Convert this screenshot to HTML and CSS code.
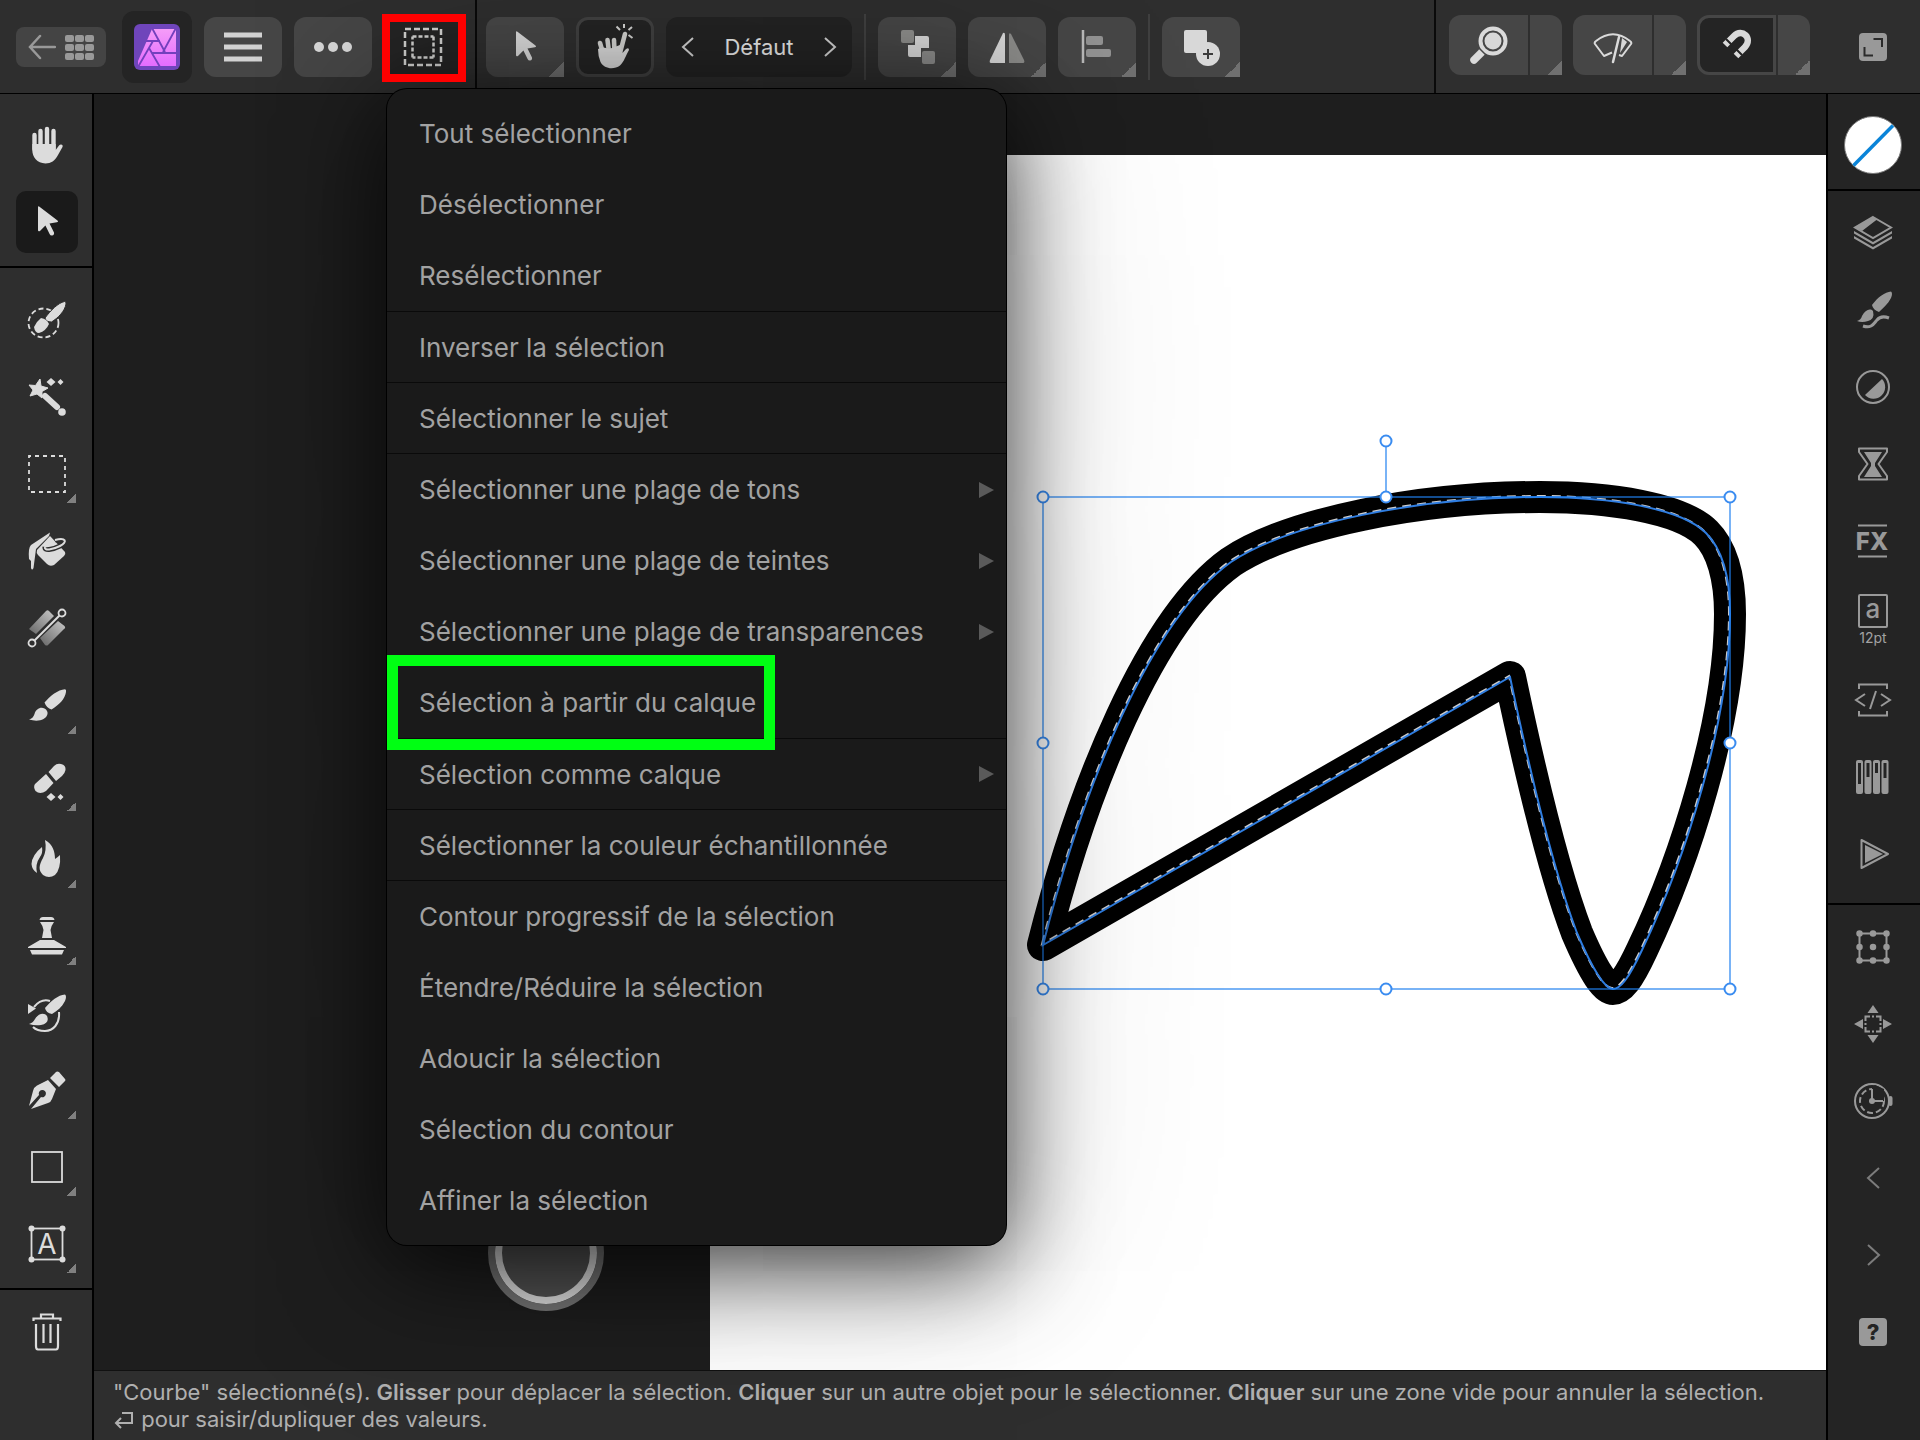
FILE: index.html
```html
<!DOCTYPE html>
<html lang="fr">
<head>
<meta charset="utf-8">
<meta name="viewport" content="width=device-width, initial-scale=1">
<title>Éditeur photo – Sélection</title>
<link rel="stylesheet" href="styles.css">
</head>
<body>
<svg class="defs" aria-hidden="true">
  <defs>
    <symbol id="pointer" viewBox="0 0 40 40"><path d="M11 5.500Q11 3.500 12.800 5L30.500 18.500Q31.800 20 29.800 20.300L22.500 21.500L27 30.500Q27.500 33 25 33.500Q23.300 33.600 22.600 32L18.400 23.500L13 29Q11 30 11 28Z"/></symbol>
    <symbol id="brush" viewBox="0 0 40 40"><path d="M17.500 17.500C23 11 31 4.500 38 4.200Q39.500 4.500 39 7C38 14 32 20 24.500 24.500Q19.500 23 17.500 17.500Z"/><path d="M2 34.500Q6 33.500 7.500 29C9 24 13.500 21.500 17.500 23.500Q21 25.500 20.500 29C19 35.500 10 37 2 34.500Z"/></symbol>
    <path id="curve" d="M1043 945C1082 790 1150 620 1231 562C1290 523 1420 497 1540 497C1610 497 1681 508 1706 533C1722 549 1730 578 1730 614C1730 720 1685 860 1642 950C1628 980 1620 989 1613 989C1606 989 1595 975 1577 933C1553 870 1530 772 1510 677Z"/>
    <linearGradient id="fade" x1="1" y1="0" x2="0" y2="1"><stop offset="0" stop-color="#dcdcdc"/><stop offset="1" stop-color="#505050"/></linearGradient>
    <linearGradient id="logo" x1="0" y1="0" x2="0" y2="1"><stop offset="0" stop-color="#f59cf8"/><stop offset="1" stop-color="#e46cff"/></linearGradient>
  </defs>
</svg>
<div class="app">
  <header class="topbar">
    <div class="bar-section">
      <button class="back" aria-label="Retour à la galerie">
        <svg width="28" height="28" viewBox="0 0 28 28"><path d="M27 14H2M12 3L2 14L12 25" fill="none" stroke="#999" stroke-width="2.500" stroke-linecap="round"/></svg>
        <span class="grid-dots"><i></i><i></i><i></i><i></i><i></i><i></i><i></i><i></i><i></i></span>
      </button>
      <button class="logo" aria-label="Photo">
        <svg width="46" height="46" viewBox="0 0 46 46"><rect width="46" height="46" rx="6" fill="#6f45bb"/><path d="M18 5H42V42H4V37Z" fill="url(#logo)"/><path d="M18 4L31 28M42 4L29 28M12 17H26M19 17L4 43M15 24L26 43M18 29H43" fill="none" stroke="#7340bd" stroke-width="1.800"/></svg>
      </button>
      <button class="tool-btn" aria-label="Menu"><svg width="40" height="40" viewBox="0 0 40 40"><path d="M1 8H39M1 20H39M1 32H39" stroke="#d2d2d2" stroke-width="5"/></svg></button>
      <button class="tool-btn" aria-label="Plus"><svg width="40" height="40" viewBox="0 0 40 40"><circle cx="6" cy="20" r="5"/><circle cx="20" cy="20" r="5"/><circle cx="34" cy="20" r="5"/></svg></button>
      <div class="select-anchor">
        <button class="tool-btn active" aria-label="Sélection" aria-expanded="true"><svg width="40" height="40" viewBox="0 0 40 40"><g fill="none" stroke="#d0d0ce" stroke-width="2.500"><rect x="2" y="2" width="36" height="36" stroke-dasharray="6 3 6 3 6 3 6 3"/><rect x="9.500" y="9.500" width="21" height="21" stroke-dasharray="4 2 4 2 4 2 3 0"/></g></svg></button>
        <span class="mark mark-red"></span>
        <nav class="menu" aria-label="Sélection">
          <div class="menu-group">
            <button>Tout sélectionner</button>
            <button>Désélectionner</button>
            <button>Resélectionner</button>
          </div>
          <div class="menu-group single"><button>Inverser la sélection</button></div>
          <div class="menu-group single"><button>Sélectionner le sujet</button></div>
          <div class="menu-group">
            <button class="sub">Sélectionner une plage de tons</button>
            <button class="sub">Sélectionner une plage de teintes</button>
            <button class="sub">Sélectionner une plage de transparences</button>
            <button>Sélection à partir du calque<span class="mark mark-green"></span></button>
          </div>
          <div class="menu-group single"><button class="sub">Sélection comme calque</button></div>
          <div class="menu-group single"><button>Sélectionner la couleur échantillonnée</button></div>
          <div class="menu-group">
            <button>Contour progressif de la sélection</button>
            <button>Étendre/Réduire la sélection</button>
            <button>Adoucir la sélection</button>
            <button>Sélection du contour</button>
            <button>Affiner la sélection</button>
          </div>
        </nav>
      </div>
    </div>
    <div class="bar-section context">
      <button class="tool-btn corner" aria-label="Pointeur"><svg width="40" height="40"><use href="#pointer"/></svg></button>
      <button class="tool-btn active ring" aria-label="Toucher"><svg width="40" height="50" viewBox="0 0 40 50"><path d="M5 21L8 31M12.500 18L14 30M19 18L19.500 30M30 12L25 31" fill="none" stroke="#d0d0ce" stroke-width="4.600" stroke-linecap="round"/><path d="M3 27Q8 24 14 27L25 23L27.500 31L31 27Q34 25 34 28C31 33 29 40 25 43.500C19 48 9 47 5.500 40Q3 34 3 27Z"/><path d="M29 2V6M21.500 4.500L25 8M37 5L33.500 8M33.500 13L37.500 16" fill="none" stroke="#d0d0ce" stroke-width="2"/></svg></button>
      <div class="preset">
        <button aria-label="Précédent"><svg width="14" height="24" viewBox="0 0 14 24"><path d="M12 3L2 12L12 21"/></svg></button>
        <span>Défaut</span>
        <button aria-label="Suivant"><svg width="14" height="24" viewBox="0 0 14 24"><path d="M2 3L12 12L2 21"/></svg></button>
      </div>
      <span class="rule"></span>
      <button class="tool-btn corner" aria-label="Ordre"><svg width="40" height="40" viewBox="0 0 40 40"><path d="M18 9H30Q32 9 32 11V21H24V30H13Q11 30 11 28V18H18Z"/><rect x="4" y="3" width="13" height="13" rx="2" fill="#8c8c8a"/><rect x="25" y="24" width="13" height="13" rx="2" fill="#8c8c8a"/></svg></button>
      <button class="tool-btn corner" aria-label="Symétrie"><svg width="40" height="40" viewBox="0 0 40 40"><path d="M16 6Q18 5 18 8V36H4Q2 36 3 33Z"/><path d="M22 8Q22 5 24 7L37 33Q38 36 36 36H22Z" fill="#8c8c8a"/></svg></button>
      <button class="tool-btn corner" aria-label="Alignement"><svg width="40" height="40" viewBox="0 0 40 40"><path d="M6 3V36" stroke="#b8b8b8" stroke-width="2.500"/><rect x="9" y="9" width="17" height="9" rx="2" fill="#929292"/><rect x="9" y="22" width="25" height="8" rx="2" fill="#929292"/></svg></button>
      <span class="rule"></span>
      <button class="tool-btn corner" aria-label="Ajouter"><svg width="40" height="40" viewBox="0 0 40 40"><rect x="3" y="3" width="23" height="23" rx="2"/><circle cx="27" cy="27" r="12" /><path d="M27 22V32M22 27H32" stroke="#3c3c3c" stroke-width="2"/></svg></button>
    </div>
    <div class="bar-section view">
      <div class="split">
        <button aria-label="Zoom"><svg width="40" height="40" viewBox="0 0 40 40"><circle cx="24" cy="16" r="12.500" fill="none" stroke="#dadada" stroke-width="4"/><circle cx="24" cy="16" r="8.500"/><path d="M13 27L5 35" stroke="#dadada" stroke-width="7.500" stroke-linecap="round"/><path d="M10 23L17 30" stroke="#464646" stroke-width="1.500"/></svg></button>
        <button class="corner" aria-label="Options de zoom"></button>
      </div>
      <div class="split">
        <button aria-label="Aperçu"><svg width="40" height="40" viewBox="0 0 40 40"><path d="M19 27.500L11 31L2 19Q1 17.500 3 16Q20 2.500 37 16Q39 17.500 38 19L29 31L26 30" fill="none" stroke="#dadada" stroke-width="2" stroke-linejoin="round"/><path d="M26 12L20 37" stroke="#dadada" stroke-width="2.500" stroke-linecap="round"/><path d="M29 13L34 17L27 28Z"/></svg></button>
        <button class="corner" aria-label="Options d’aperçu"></button>
      </div>
      <div class="split on">
        <button aria-label="Magnétisme"><svg width="40" height="40" viewBox="0 0 40 40"><path d="M8 20L17 11C25 3 36 13 28 22L19 31" fill="none" stroke="#dadada" stroke-width="6.500"/><path d="M9 14L15 20M19 24L25 30" stroke="#242424" stroke-width="2"/></svg></button>
        <button class="corner" aria-label="Options de magnétisme"></button>
      </div>
      <button class="expand" aria-label="Plein écran"><svg width="28" height="28" viewBox="0 0 28 28"><rect width="28" height="28" rx="4" fill="#999"/><path d="M14.500 6H23V14M5.500 14V22.500H14" fill="none" stroke="#2a2a2a" stroke-width="2"/></svg></button>
    </div>
  </header>

  <aside class="rail tools" aria-label="Outils">
    <div class="rail-group">
      <button aria-label="Main"><svg width="40" height="40" viewBox="0 0 40 40"><path d="M7.500 10V24M13.500 6V22M20 4V22M26.500 6V24" fill="none" stroke="#dcdcdc" stroke-width="4.400" stroke-linecap="round"/><path d="M5.300 19H28.700V25L32 20.500Q33.500 19 35 19.800Q36.200 20.500 35.500 22L31 30C28 36 24 38.400 18.500 38.400C10 38.400 5.300 32 5.300 25Z"/></svg></button>
      <button aria-label="Déplacement" class="current"><span><svg width="40" height="40"><use href="#pointer"/></svg></span></button>
    </div>
    <div class="rail-group">
      <button aria-label="Pinceau de sélection"><svg width="40" height="40" viewBox="0 0 40 40"><ellipse cx="16.500" cy="23" rx="15" ry="14.500" fill="none" stroke="#dcdcdc" stroke-width="1.800" stroke-dasharray="5 3"/><path d="M18 18C24 10 31 3 37.500 1.500Q39.500 1.500 39 4C38 11 31 18 24.500 22Q19 22 18 18Z" stroke="#2e2e2e" stroke-width="1"/><path d="M7 27Q9 22 14 18Q20 19 22 24Q19 31 12 33Q8 33 7 27Z"/></svg></button>
      <button aria-label="Baguette magique"><svg width="40" height="40" viewBox="0 0 40 40"><path d="M2 8L8.500 8.500L13 2L14 9L21 11L15 14.500L15 21L10 17L3 19L6 13Z" stroke="#dcdcdc" stroke-linejoin="round"/><path d="M18 19L30 30" stroke="#dcdcdc" stroke-width="6" stroke-linecap="round"/><circle cx="35" cy="35" r="3.800"/><path d="M24 1L28.500 5L24 9L19.500 5ZM33.500 2L36.500 5L33.500 8L30.500 5Z"/></svg></button>
      <button class="more" aria-label="Rectangle de sélection"><svg width="40" height="40" viewBox="0 0 40 40"><rect x="2" y="2" width="36" height="36" fill="none" stroke="#dcdcdc" stroke-width="1.800" stroke-dasharray="4 4" stroke-dashoffset="2"/></svg></button>
      <button aria-label="Remplissage"><svg width="40" height="40" viewBox="0 0 40 40"><path d="M23 1.500L4 14Q1 17 2 28L4 30V37Q5 40 6.500 37L9 18L22 5Z"/><path d="M10 19L23 5L38 21Q39 23 37 25L27 34Q23 36 20 33L11 24Q9 22 10 19Z"/><path d="M28 9C39 6 41 11 33 15C25 19 17 20 18 16" fill="none" stroke="#2e2e2e" stroke-width="5"/><path d="M28 9C39 6 41 11 33 15C25 19 17 20 18 16" fill="none" stroke="#dcdcdc" stroke-width="2"/></svg></button>
      <button aria-label="Dégradé"><svg width="40" height="40" viewBox="0 0 40 40"><path d="M2 21L19 3Q20.500 1.500 22 3L27 8L9 26ZM13 30L31 13L37.500 18Q39 20 37 21L21 37Q20 38 18 37Z" fill="url(#fade)"/><path d="M7 33L33 7" stroke="#dcdcdc" stroke-width="2"/><circle cx="5" cy="35" r="3.500" fill="#2e2e2e" stroke="#dcdcdc" stroke-width="1.800"/><circle cx="35" cy="5" r="3.500" fill="#2e2e2e" stroke="#dcdcdc" stroke-width="1.800"/></svg></button>
      <button class="more" aria-label="Pinceau"><svg width="40" height="40"><use href="#brush"/></svg></button>
      <button class="more" aria-label="Gomme"><svg width="40" height="40" viewBox="0 0 40 40"><path d="M21.500 10L27 4Q30 1 34 2Q39 3 38.500 8Q38 11 35 14L29 19ZM19 12L26.500 21L19 29Q13 33 8.500 29Q6 25 8 22Z"/><path d="M24 31L28.500 35L24 39L19.500 35ZM33.500 32L36.500 35L33.500 38L30.500 35Z"/></svg></button>
      <button class="more" aria-label="Densité"><svg width="40" height="40" viewBox="0 0 40 40"><path d="M18 1C26 5 28 13 28 20Q31 18 33 16Q34 30 28 36Q22 40 16 36C11 31 12 26 16 19Q20 11 18 1Z"/><path d="M15 8Q5 16 4.500 25Q5 31 10 34Q8 25 13 18Q16 14 15 8Z"/></svg></button>
      <button class="more" aria-label="Tampon"><svg width="40" height="40" viewBox="0 0 40 40"><path d="M12.500 4Q13 1 16 1H24Q27 1 27.500 4ZM13 6H27Q24 10 23.500 14L25 22H15L16.500 14Q16 10 13 6ZM1 31L13 24H27L39 31V32H1ZM3 34H37L35 38.500H5Z"/></svg></button>
      <button aria-label="Historique"><svg width="40" height="40" viewBox="0 0 40 40"><path d="M1 11L9 15.500L1 21Z"/><path d="M7 14C12 8 17 6 23 8M32 19C33 31 26 38 18 38Q10 38 6 34" fill="none" stroke="#dcdcdc" stroke-width="2"/><path d="M18 15C24 8 31 2 38 1.500Q40 3 38 8C35 14 30 18 25 21Q19 20 18 15ZM2 31Q6 30 8 26C11 21 17 19 20 23Q23 30 14 32Q8 33 2 31Z"/></svg></button>
      <button class="more" aria-label="Plume"><svg width="40" height="40" viewBox="0 0 40 40"><path d="M2 36L6 21Q7 17 10 15.500L21 10L29 19L25 29Q24 32 21 33L4 39L14 27A3.600 3.600 0 1 0 12 25ZM23 8L29 2Q30 1 32 2L38 9Q39 10 38 11L32 17Z"/></svg></button>
      <button class="more" aria-label="Rectangle"><svg width="40" height="40" viewBox="0 0 40 40"><rect x="5" y="5" width="30" height="30" fill="none" stroke="#dcdcdc" stroke-width="1.800"/></svg></button>
      <button class="more" aria-label="Texte"><svg width="40" height="40" viewBox="0 0 40 40"><rect x="4.500" y="4.500" width="31" height="31" fill="none" stroke="#dcdcdc" stroke-width="1.800"/><circle cx="4.500" cy="4.500" r="3"/><circle cx="35.500" cy="4.500" r="3"/><circle cx="4.500" cy="35.500" r="3"/><circle cx="35.500" cy="35.500" r="3"/><text x="20" y="30" text-anchor="middle" font-size="28">A</text></svg></button>
    </div>
    <div class="rail-group">
      <button aria-label="Supprimer"><svg width="40" height="40" viewBox="0 0 40 40"><path d="M6.500 9V6.500H33.500V9M14 6V2.500H26V6M9 12V34Q9 37.500 11 37.500H29Q31 37.500 31 34V12M16.500 12V31M23.500 12V31" fill="none" stroke="#dcdcdc" stroke-width="2.200"/></svg></button>
    </div>
  </aside>

  <main class="canvas">
    <div class="joystick"></div>
    <div class="artboard">
      <svg width="1116" height="1216" viewBox="710 155 1116 1216">
        <use href="#curve" class="stroke"/>
        <use href="#curve" class="ants" x="-1" y="-1"/>
        <use href="#curve" class="outline"/>
        <path class="bounds" d="M1043 497H1730V989H1043ZM1386 441V497"/>
        <g class="handles"><circle cx="1386" cy="441" r="5.500"/><circle cx="1043" cy="497" r="5.500"/><circle cx="1386" cy="497" r="5.500"/><circle cx="1730" cy="497" r="5.500"/><circle cx="1043" cy="743" r="5.500"/><circle cx="1730" cy="743" r="5.500"/><circle cx="1043" cy="989" r="5.500"/><circle cx="1386" cy="989" r="5.500"/><circle cx="1730" cy="989" r="5.500"/></g>
      </svg>
    </div>
  </main>

  <aside class="rail studio" aria-label="Studios">
    <div class="rail-group color"><button aria-label="Couleur"><svg width="60" height="60" viewBox="0 0 60 60"><circle cx="30" cy="30" r="28.500" fill="#fff" stroke="#777" stroke-width="1"/><path d="M10.500 50.500L50 10.500" stroke="#0a84d8" stroke-width="3.500"/></svg></button></div>
    <div class="rail-group">
      <button aria-label="Calques"><svg width="40" height="40" viewBox="0 0 40 40"><path d="M20 4L38 14.500L20 25L2 14.500Z" fill="none" stroke="#999" stroke-width="2"/><path d="M20 4L24 6.500L9 18L2 14.500ZM1 18L20 29L39 18V20.500L20 31.500L1 20.500ZM1 23L20 34L39 23V25.500L20 36.500L1 25.500Z"/></svg></button>
      <button aria-label="Pinceaux"><svg width="40" height="40" viewBox="0 0 40 40"><path d="M19 15C25 7 32 2 38 1.500Q40 3 38 8C35 14 30 18 26 22Q20 20 19 15ZM4 31Q8 30 9 26C12 20 17 18 20 21Q22 29 15 31Q9 33 4 31Z"/><path d="M10 36C19 39 21 33 24 30Q28 25 36 28" fill="none" stroke="#999" stroke-width="3"/></svg></button>
      <button aria-label="Réglages"><svg width="40" height="40" viewBox="0 0 40 40"><circle cx="20" cy="20" r="16" fill="none" stroke="#999" stroke-width="2"/><path d="M29 12A11 11 0 0 1 12 28Z"/></svg></button>
      <button aria-label="Filtres"><svg width="40" height="40" viewBox="0 0 40 40"><path d="M6 4.500H34V8L25.500 20L34 32V35.500H6V32L14.500 20L6 8Z" fill="none" stroke="#999" stroke-width="2" stroke-linejoin="round"/><path d="M11 8H29L22 19V22L29 33H11L18 22V19Z"/></svg></button>
      <button aria-label="Effets"><svg width="40" height="40" viewBox="0 0 40 40"><path d="M5 4.500H34M5 35.500H34" stroke="#999" stroke-width="2"/><text x="19" y="29" text-anchor="middle" font-size="24" font-weight="800">FX</text></svg></button>
      <button class="type" aria-label="Texte"><svg width="40" height="36" viewBox="0 0 40 36"><rect x="6" y="2" width="28" height="32" rx="1" fill="none" stroke="#999" stroke-width="2"/><text x="20" y="25" text-anchor="middle" font-size="26" font-weight="500">a</text></svg><span>12pt</span></button>
      <button aria-label="Code"><svg width="40" height="40" viewBox="0 0 40 40"><path d="M6 9V4.500H34V9M6 31V35.500H34V31M12 14L3 20L12 26M28 14L37 20L28 26M23 11L17 29" fill="none" stroke="#999" stroke-width="2"/></svg></button>
      <button aria-label="Canaux"><svg width="40" height="40" viewBox="0 0 40 40"><rect x="3" y="3" width="7" height="34" rx="2"/><rect x="11.500" y="3" width="7" height="34" rx="2"/><rect x="20" y="3" width="7" height="34" rx="2"/><rect x="28.500" y="3" width="7" height="34" rx="2"/><path d="M6.500 6V27M15 6V20M23.500 6V16M32 6V21" stroke="#242424" stroke-width="3"/></svg></button>
      <button aria-label="Macros"><svg width="40" height="40" viewBox="0 0 40 40"><path d="M8.500 6L35 20L8.500 34Z" fill="none" stroke="#999" stroke-width="2" stroke-linejoin="round"/><path d="M12 11L30 20L12 29Z"/></svg></button>
    </div>
    <div class="rail-group">
      <button aria-label="Transformation"><svg width="40" height="40" viewBox="0 0 40 40"><rect x="6.500" y="6.500" width="27" height="27" fill="none" stroke="#999" stroke-width="2"/><path d="M6.500 6.500h0M20 6.500h0M33.500 6.500h0M6.500 20h0M20 20h0M33.500 20h0M6.500 33.500h0M20 33.500h0M33.500 33.500h0" stroke="#999" stroke-width="6.500" stroke-linecap="round"/></svg></button>
      <button aria-label="Navigateur"><svg width="40" height="40" viewBox="0 0 40 40"><path d="M20 1L25.500 9H14.500ZM20 39L25.500 31H14.500ZM1 20L10 15V25ZM39 20L30 15V25Z"/><path d="M12.500 17V12.500H17M23 12.500H27.500V17M27.500 23V27.500H23M17 27.500H12.500V23M19 12.500H21M19 27.500H21M12.500 19V21M27.500 19V21" fill="none" stroke="#999" stroke-width="2"/></svg></button>
      <button aria-label="Historique"><svg width="40" height="40" viewBox="0 0 40 40"><circle cx="19" cy="20" r="17" fill="none" stroke="#999" stroke-width="2"/><circle cx="19" cy="20" r="12" fill="none" stroke="#999" stroke-width="2" stroke-dasharray="6 3" pathLength="76"/><path d="M19 6V20H31V8L22 4Z" fill="#242424"/><path d="M19 8V20H30" fill="none" stroke="#999" stroke-width="2"/><circle cx="19" cy="20" r="3"/><rect x="35.500" y="15" width="4" height="10" rx="2"/></svg></button>
      <button aria-label="Précédent"><svg width="40" height="40" viewBox="0 0 40 40"><path d="M26 10L15 20L26 30" fill="none" stroke="#7c7c7c" stroke-width="2"/></svg></button>
      <button aria-label="Suivant"><svg width="40" height="40" viewBox="0 0 40 40"><path d="M15 10L26 20L15 30" fill="none" stroke="#7c7c7c" stroke-width="2"/></svg></button>
      <button aria-label="Aide"><span class="help">?</span></button>
    </div>
  </aside>

  <footer class="status">"Courbe" sélectionné(s). <b>Glisser</b> pour déplacer la sélection. <b>Cliquer</b> sur un autre objet pour le sélectionner. <b>Cliquer</b> sur une zone vide pour annuler la sélection.<br><svg width="22" height="20" viewBox="0 0 22 20"><path d="M9 3H19V13H3M8 8L3 13L8 18" fill="none" stroke="#b0b0b0" stroke-width="2"/></svg> pour saisir/dupliquer des valeurs.</footer>
</div>
</body>
</html>
```

FILE: styles.css
```css
* { box-sizing: border-box; }

body {
  margin: 0;
  background: #1c1c1c;
  color: #a2a2a2;
  font-family: Inter, "Liberation Sans", sans-serif;
  font-size: 22px;
}

button {
  border: 0;
  padding: 0;
  margin: 0;
  background: none;
  color: inherit;
  font: inherit;
  display: flex;
  align-items: center;
  justify-content: center;
}

svg { display: block; fill: #d8d8d8; }

.defs { position: absolute; width: 0; height: 0; }
.defs #curve { fill: inherit; }

.app {
  min-height: 100vh;
  display: grid;
  grid-template-columns: 94px 1fr 94px;
  grid-template-rows: auto 1fr auto;
  overflow: hidden;
}

/* Top bar */
.topbar {
  grid-column: 1 / -1;
  display: flex;
  height: 94px;
  background: #2e2e2e;
  border-bottom: 1px solid #000;
}

.bar-section {
  display: flex;
  align-items: flex-start;
  gap: 12px;
  padding: 17px 13px 0 16px;
  border-right: 2px solid #0a0a0a;
}

.context { flex: 1; padding-left: 9px; }

.view { gap: 11px; padding: 15px 0 0 13px; border-right: 0; }

.back {
  width: 90px;
  height: 40px;
  margin: 10px 4px 0 0;
  gap: 9px;
  border-radius: 8px;
  background: #444;
}

.grid-dots {
  display: grid;
  grid-template-columns: repeat(3, 9px);
  grid-auto-rows: 7px;
  gap: 2px 1px;
}

.grid-dots i { background: #999; border-radius: 2px; }

.logo {
  width: 70px;
  height: 72px;
  margin-top: -6px;
  border-radius: 12px;
  background: #242424;
}

.tool-btn {
  position: relative;
  width: 78px;
  height: 60px;
  border-radius: 12px;
  background: #464646;
}

.tool-btn.active { background: #242424; }
.tool-btn.ring { border: 3px solid #404040; }
.tool-btn.corner { border-bottom-right-radius: 0; }

.corner { position: relative; }

.corner::after {
  content: "";
  position: absolute;
  right: 0;
  bottom: 0;
  width: 15px;
  height: 15px;
  background: linear-gradient(135deg, transparent 50%, #707070 50%);
}

.rule { width: 2px; height: 66px; margin-top: -3px; background: #404040; }

.preset {
  display: flex;
  align-items: center;
  justify-content: space-between;
  width: 186px;
  height: 60px;
  padding: 0 15px;
  border-radius: 12px;
  background: #232323;
  color: #e8e8e8;
}

.preset path { fill: none; stroke: #d0d0d0; stroke-width: 2; }

.split { display: flex; gap: 2px; height: 60px; }

.split button { background: #464646; }
.split button:first-child { width: 79px; border-radius: 12px 0 0 12px; }
.split button:last-child { width: 32px; border-radius: 0 12px 0 0; }
.split.on button:first-child { background: #242424; border: 3px solid #464646; }

.expand { width: 94px; height: 64px; margin-left: 5px; }

/* Selection menu */
.select-anchor { position: relative; }

.menu {
  position: absolute;
  z-index: 10;
  top: 72px;
  left: 3px;
  width: 619px;
  padding: 9px 0;
  border-radius: 20px;
  background: #1a1a1a;
  box-shadow:
    0 0 0 1px #000,
    0 20px 100px rgba(0, 0, 0, .8),
    0 10px 240px rgba(0, 0, 0, .16);
  font-size: 26px;
}

.menu-group + .menu-group { border-top: 1px solid #0a0a0a; }

.menu button {
  position: relative;
  width: 100%;
  height: 71px;
  padding: 0 12px 0 32px;
  justify-content: flex-start;
}

.menu .single button { height: 70px; }

.menu .sub::after {
  content: "";
  margin-left: auto;
  border-left: 15px solid #5a5a5a;
  border-top: 8px solid transparent;
  border-bottom: 8px solid transparent;
}

.mark { position: absolute; pointer-events: none; }
.mark-red { z-index: 20; inset: -3px -4px -5px -2px; border: 8px solid #f00; }
.mark-green { top: -12px; bottom: -12px; left: 0; width: 388px; border: 11px solid #00ff13; }

/* Side rails */
.rail { grid-row: 2 / 4; background: #2e2e2e; }
.tools { border-right: 2px solid #000; }
.tools svg { fill: #dcdcdc; }
.tools button { padding-left: 2px; }

.studio { grid-column: 3; background: #242424; border-left: 2px solid #000; }
.studio svg { fill: #999; }
.studio button { padding-right: 2px; }

.rail button { position: relative; width: 100%; height: 77px; }

.tools .rail-group { padding: 13px 0 6px; border-bottom: 2px solid #000; }
.tools .rail-group:first-child { padding-top: 12px; }
.tools .rail-group:last-child { padding-top: 3px; border: 0; }

.studio .rail-group { padding: 3px 0 11px; border-bottom: 2px solid #000; }
.studio .rail-group:last-child { border: 0; padding-bottom: 0; }
.studio .color { padding: 12px 0 6px; }

.current span {
  display: grid;
  place-items: center;
  width: 62px;
  height: 62px;
  border-radius: 10px;
  background: #1a1a1a;
}

.more::after {
  content: "";
  position: absolute;
  right: 16px;
  bottom: 9px;
  width: 9px;
  height: 9px;
  background: linear-gradient(135deg, transparent 50%, #808080 50%);
}

.rail .type { height: 82px; flex-direction: column; font-size: 14px; line-height: 18px; }

.help {
  width: 28px;
  height: 28px;
  border-radius: 4px;
  background: #999;
  color: #242424;
  font-size: 22px;
  font-weight: 800;
  line-height: 28px;
}

/* Canvas */
.canvas {
  grid-column: 2;
  grid-row: 2;
  position: relative;
  overflow: hidden;
  background: #1e1e1e;
}

.artboard {
  position: absolute;
  inset: 61px 0 0 616px;
  overflow: hidden;
  background: #fff;
}

.stroke { fill: none; stroke: #000; stroke-width: 32px; stroke-linejoin: round; }
.ants { fill: none; stroke: #ccc; stroke-width: 2px; stroke-dasharray: 9 6; }
.outline { fill: none; stroke: #2f7de0; stroke-width: 2px; }
.bounds { fill: none; stroke: #2080f0; stroke-opacity: .6; stroke-width: 2px; }
.handles { fill: #fff; stroke: #3a8cf0; stroke-width: 2px; }

.joystick {
  position: absolute;
  left: 394px;
  top: 1101px;
  width: 116px;
  height: 116px;
  border-radius: 50%;
  border: 7px solid #777;
  background: #555;
  box-shadow: inset 0 0 0 7px #e4e4e4;
}

/* Status bar */
.status {
  grid-column: 2;
  grid-row: 3;
  padding: 8px 16px 7px 19px;
  border-top: 1px solid #111;
  background: #2e2e2e;
  color: #b0b0b0;
  font-size: 22px;
  line-height: 27px;
  white-space: nowrap;
}

.status b { font-weight: 600; }
.status svg { display: inline-block; vertical-align: -3px; fill: none; }
```
